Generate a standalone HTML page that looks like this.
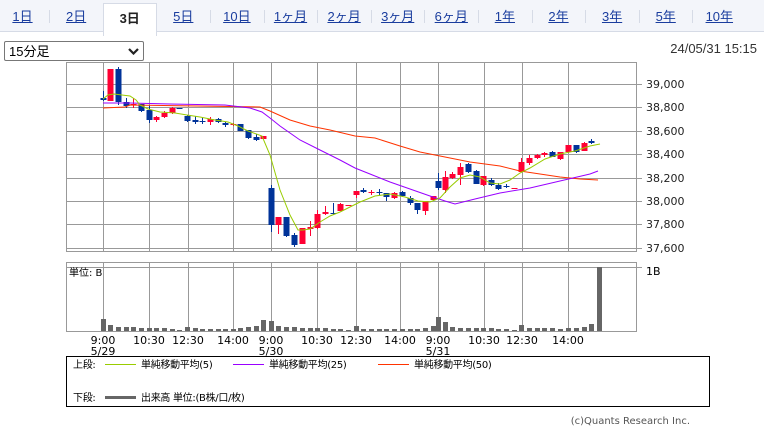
<!DOCTYPE html>
<html><head><meta charset="utf-8"><style>
body{margin:0;width:764px;height:437px;background:#fff;font-family:"Liberation Sans","Noto Sans CJK JP",sans-serif;position:relative;overflow:hidden}
.tabs{position:absolute;left:0;top:0;width:764px;height:31px;background:#f3f5fa;border-bottom:1px solid #d6dbe6}
.tab{position:absolute;top:0;height:31px;width:54px;text-align:center;line-height:33px;font-size:13px;color:#1a3d9e;text-decoration:underline}
.sep{position:absolute;top:10px;width:1px;height:13px;background:#d6dbe6}
.act{background:#fff;border:1px solid #d6dbe6;border-bottom:none;height:32px;top:3px;line-height:29px;font-weight:bold;color:#222;text-decoration:none;width:52px}
.sel{position:absolute;left:4px;top:41px;width:140px;height:20px;border:1px solid #777;border-radius:2px;font-size:13px;line-height:19px;box-sizing:border-box;padding-left:4px}
.date{position:absolute;right:7px;top:41px;font-size:13px;color:#333}
svg text{font-family:"DejaVu Sans","Noto Sans CJK JP",sans-serif}
</style></head><body>
<div class="tabs" id="tabs"></div>
<div class="sel">15分足<svg style="position:absolute;right:4px;top:6px" width="11" height="7"><polyline points="1,1 5.5,5.5 10,1" fill="none" stroke="#222" stroke-width="2.2"/></svg></div>
<div class="date">24/05/31 15:15</div>
<svg id="c" width="764" height="437" style="position:absolute;left:0;top:0"></svg>
<script>
var t=["1日","2日","3日","5日","10日","1ヶ月","2ヶ月","3ヶ月","6ヶ月","1年","2年","3年","5年","10年"],h="";
for(var i=0;i<14;i++){var x=-4.5+53.6*i;h+='<div class="tab'+(i==2?' act':'')+'" style="left:'+x.toFixed(1)+'px">'+t[i]+'</div>';if(i>0&&i!=2&&i!=3)h+='<div class="sep" style="left:'+x.toFixed(0)+'px"></div>';}
document.getElementById('tabs').innerHTML=h;
var s="";
var gx=[103,149,188,233,271,317,356,400,438,484,522,568];
var gy=[84,107,131,154,178,201,224,248];
s+='<rect x="66.5" y="62.5" width="570" height="189" fill="#fff" stroke="#999"/>';
gx.forEach(function(x){s+='<line x1="'+x+'.5" y1="62" x2="'+x+'.5" y2="251" stroke="#999"/>';s+='<line x1="'+x+'.5" y1="262" x2="'+x+'.5" y2="331" stroke="#999"/>'});
var lab=["39,000","38,800","38,600","38,400","38,200","38,000","37,800","37,600"];
gy.forEach(function(y,i){s+='<line x1="66" y1="'+y+'.5" x2="642" y2="'+y+'.5" stroke="#999"/>';s+='<text x="646" y="'+(y+4)+'" font-size="11" fill="#222">'+lab[i]+'</text>'});
var c=[[103,98,100,91,101,0],[110,69,101,69,101,1],[118,69,102,67,105,0],[126,102,106,98,108,0],[133,104,105,98,108,1],[141,104,111,104,112,0],[149,110,120,105,123,0],[156,117,120,116,122,1],[164,113,117,111,118,1],[172,108,113,107,114,1],[179,108,109,108,109,0],[187,116,121,115,122,0],[195,120,122,116,124,0],[202,121,122,118,124,0],[210,119,122,117,125,1],[218,119,122,118,123,0],[225,123,125,122,127,0],[233,124,125,123,126,1],[240,124,131,124,131,0],[248,130,138,130,139,0],[256,137,140,134,141,0],[263,136,139,136,139,1],
[271,188,225,185,232,0],[278,217,225,217,234,1],[286,217,236,217,237,0],[294,235,245,233,247,0],[302,228,244,228,244,1],[310,227,229,221,236,1],[317,214,228,210,229,1],[325,212,214,206,215,1],[333,213,214,203,215,0],[340,204,211,203,211,1],[348,205,206,205,206,1],[356,191,195,191,198,1],[363,190,192,188,193,0],[371,192,193,190,195,1],[379,192,193,189,195,0],[386,193,197,193,201,0],[394,193,198,192,199,1],[402,192,196,191,197,0],[410,198,203,196,205,0],[417,203,210,203,214,0],[425,201,211,201,215,1],[433,196,200,196,200,1],
[438,181,188,173,190,0],[445,177,190,171,193,1],[452,174,178,172,179,1],[460,167,175,163,185,1],[468,164,172,163,173,0],[476,171,184,170,184,0],[483,176,185,176,186,1],[491,180,185,178,186,0],[498,185,189,183,190,0],[506,186,187,184,188,0],[514,188,189,188,189,1],[521,162,172,158,172,1],[529,158,163,155,165,1],[537,155,158,154,159,1],[544,153,155,152,157,1],[552,152,157,151,157,0],[560,152,159,152,160,1],[568,145,152,145,153,1],[576,145,152,145,153,0],[584,143,151,142,151,1],[591,141,143,139,144,0]];
c.forEach(function(k){var col=k[5]?"#ff0033":"#003399";s+='<line x1="'+(k[0]+.5)+'" y1="'+k[3]+'" x2="'+(k[0]+.5)+'" y2="'+k[4]+'" stroke="'+col+'"/>';s+='<rect x="'+(k[0]-2.5)+'" y="'+k[1]+'" width="6" height="'+Math.max(1,k[2]-k[1])+'" fill="'+col+'"/>'});
function pl(p,col){s+='<polyline fill="none" stroke="'+col+'" stroke-width="1" points="'+p+'"/>'}
pl("103,108 125,107 130,105 260,107 270,111 290,120 310,126 330,130 355,136 375,138 400,146 420,152 440,156 470,162 500,166 520,171 540,174 560,177 580,179 598,180","#ff3300");
pl("103,103 130,103 170,104 225,105 250,108 262,112 270,118 280,126 300,140 320,150 340,160 355,168 370,174 390,182 410,189 430,196 445,201 455,204 475,199 500,193 530,188 560,181 590,174 598,171","#9900ff");
pl("103,99 108,95 114,94 130,96 136,100 140,105 148,109 160,112 175,113 187,115 200,117 215,120 228,122 238,126 248,131 262,136 270,155 280,190 290,215 298,230 303,230 310,229 320,222 330,216 340,212 350,207 360,202 375,196 390,194 405,197 418,201 430,202 440,198 450,187 460,178 470,175 480,177 490,183 500,184 510,180 520,173 530,168 545,159 560,154 575,151 590,146 600,144","#99cc00");
s+='<rect x="66.5" y="262.5" width="570" height="69" fill="none" stroke="#999"/>';
s+='<line x1="66" y1="267.5" x2="642" y2="267.5" stroke="#999"/>';
s+='<text x="646" y="275" font-size="11">1B</text><text x="69" y="276" font-size="10">単位: B</text>';
var v=[12,6,4,4,4,3,3,3,3,2,1,4,3,2,2,2,2,2,3,4,5,11,10,5,4,4,3,3,3,3,2,2,1,5,2,2,2,2,2,2,2,2,3,5,14,9,4,3,3,3,3,3,2,2,1,6,3,3,3,3,2,3,3,4,7,64];
c.forEach(function(k,i){s+='<rect x="'+(k[0]-2)+'" y="'+(331-v[i])+'" width="5" height="'+v[i]+'" fill="#666"/>'});
s+='<rect x="597" y="267" width="5" height="64" fill="#666"/>';
var xl=[[103,"9:00"],[149,"10:30"],[188,"12:30"],[233,"14:00"],[271,"9:00"],[317,"10:30"],[356,"12:30"],[400,"14:00"],[438,"9:00"],[484,"10:30"],[522,"12:30"],[568,"14:00"]];
xl.forEach(function(a){s+='<text x="'+a[0]+'" y="344" font-size="11" text-anchor="middle">'+a[1]+'</text>'});
[[103,"5/29"],[271,"5/30"],[438,"5/31"]].forEach(function(a){s+='<text x="'+a[0]+'" y="355" font-size="11" text-anchor="middle">'+a[1]+'</text>'});
s+='<rect x="66.5" y="356.5" width="643" height="50" fill="none" stroke="#000"/>';
s+='<g letter-spacing="-0.3"><text x="73" y="368" font-size="10">上段:</text><line x1="105" y1="364.5" x2="136" y2="364.5" stroke="#99cc00"/><text x="141" y="368" font-size="10">単純移動平均(5)</text>';
s+='<line x1="233" y1="364.5" x2="264" y2="364.5" stroke="#9900ff"/><text x="269" y="368" font-size="10">単純移動平均(25)</text>';
s+='<line x1="378" y1="364.5" x2="409" y2="364.5" stroke="#ff3300"/><text x="414" y="368" font-size="10">単純移動平均(50)</text>';
s+='<text x="73" y="401" font-size="10">下段:</text><line x1="105" y1="397.5" x2="136" y2="397.5" stroke="#666" stroke-width="3"/><text x="141" y="401" font-size="10">出来高 単位:(B株/口/枚)</text></g>';
s+='<text x="690" y="424" font-size="10" fill="#555" text-anchor="end">(c)Quants Research Inc.</text>';
document.getElementById('c').innerHTML=s;
</script>
</body></html>
